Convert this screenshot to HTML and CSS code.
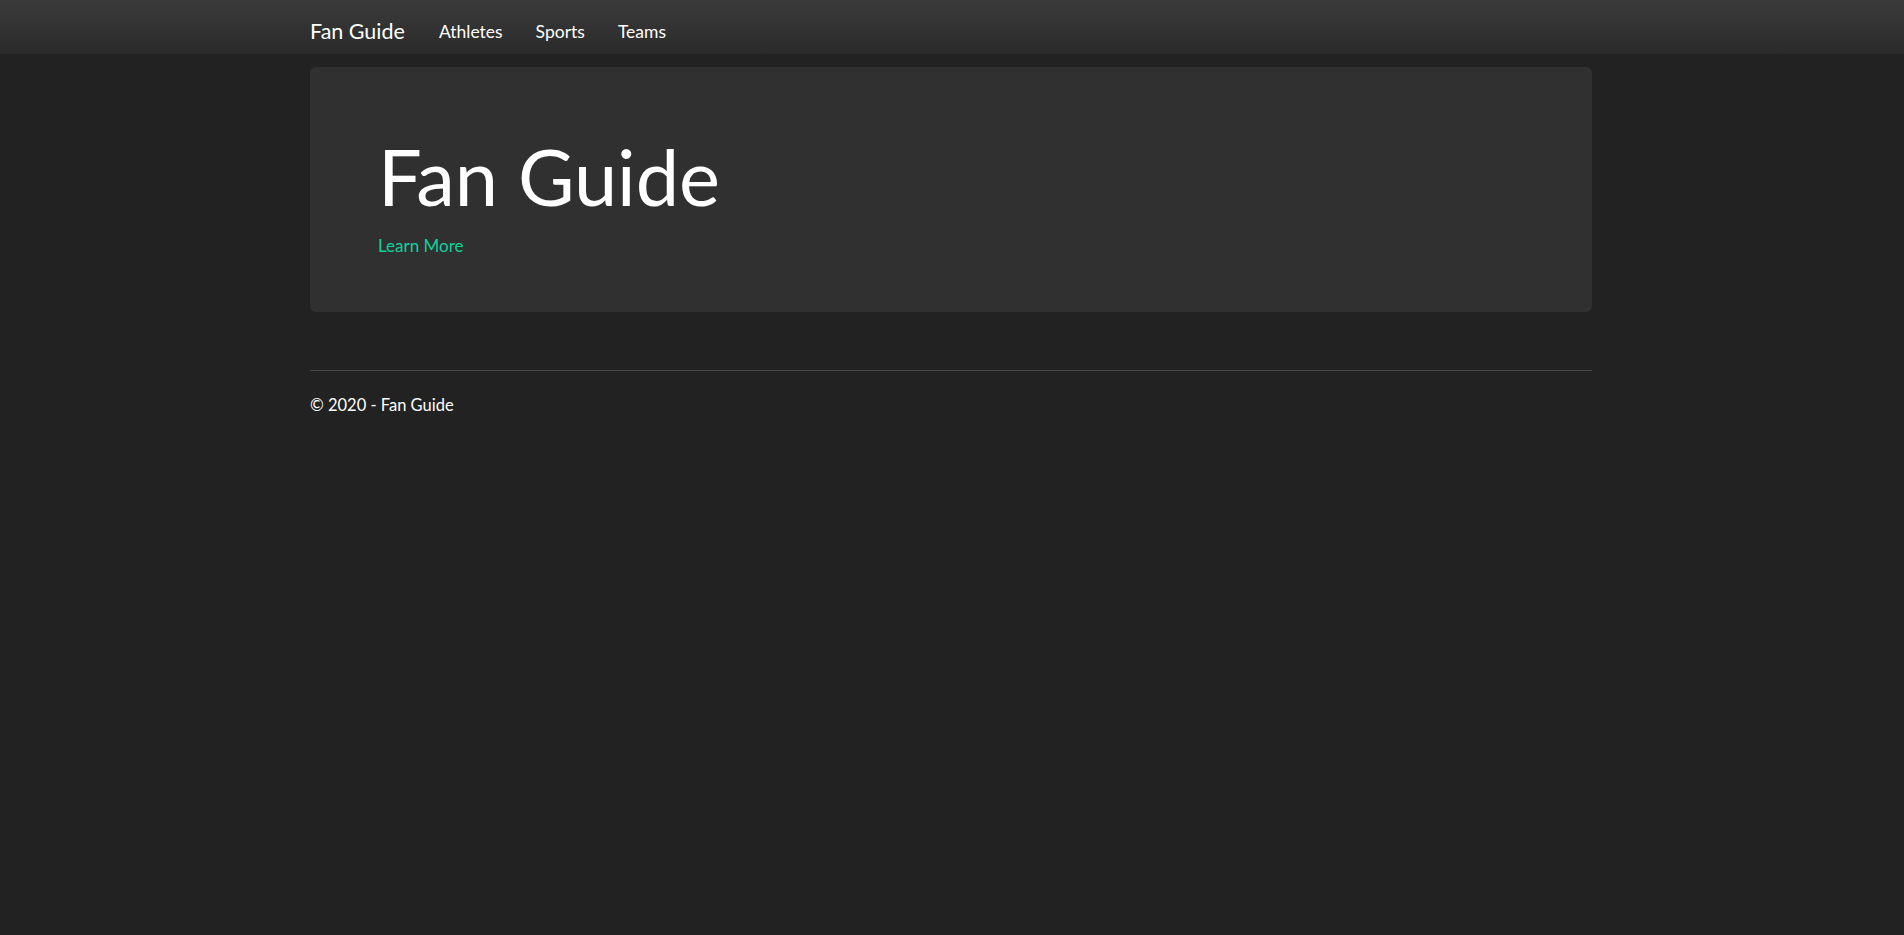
FILE: index.html
```html
<!DOCTYPE html>
<html lang="en">
<head>
<meta charset="utf-8">
<title>Fan Guide</title>
<link rel="stylesheet" href="styles.css">
</head>
<body>
<header class="navbar">
  <div class="container nav-inner">
    <a class="brand" href="#">Fan Guide</a>
    <nav class="nav-links">
      <a href="#">Athletes</a>
      <a href="#">Sports</a>
      <a href="#">Teams</a>
    </nav>
  </div>
</header>
<main class="container">
  <section class="jumbotron">
    <h1>Fan Guide</h1>
    <a class="learn" href="#">Learn More</a>
  </section>
  <hr class="divider">
  <footer class="footer">© 2020 - Fan Guide</footer>
</main>
</body>
</html>
```
FILE: styles.css
```css
* { box-sizing: border-box; }
html, body { margin: 0; padding: 0; }
body {
  background: #222222;
  color: #ffffff;
  font-family: Lato, "Open Sans", "Liberation Sans", sans-serif;
  font-size: 16.5px;
  min-height: 935px;
}
a { text-decoration: none; }
.container {
  width: 1282px;
  margin-left: calc(50% - 642px);
}
.navbar {
  height: 54px;
  background: linear-gradient(#3b3b3b, #2a2a2a);
}
.nav-inner {
  display: flex;
  align-items: center;
  height: 54px;
  padding-top: 7px;
}
.brand {
  color: #ffffff;
  font-size: 21.5px;
  margin-right: 34px;
}
.nav-links {
  display: flex;
  gap: 33px;
  padding-top: 2px;
}
.nav-links a {
  color: #ffffff;
  font-size: 17.5px;
}
.jumbotron {
  margin-top: 13px;
  height: 245px;
  background: #303030;
  border-radius: 6px;
  padding: 67px 68px 0;
}
.jumbotron h1 {
  margin: 0;
  font-size: 77.5px;
  font-weight: 400;
  line-height: 1.1;
}
.learn {
  display: inline-block;
  margin-top: 16px;
  color: #10d29c;
  font-size: 17px;
}
.divider {
  margin: 58px 0 0;
  border: 0;
  border-top: 1px solid #464646;
}
.footer {
  padding-top: 24px;
  font-size: 16.5px;
}
```
